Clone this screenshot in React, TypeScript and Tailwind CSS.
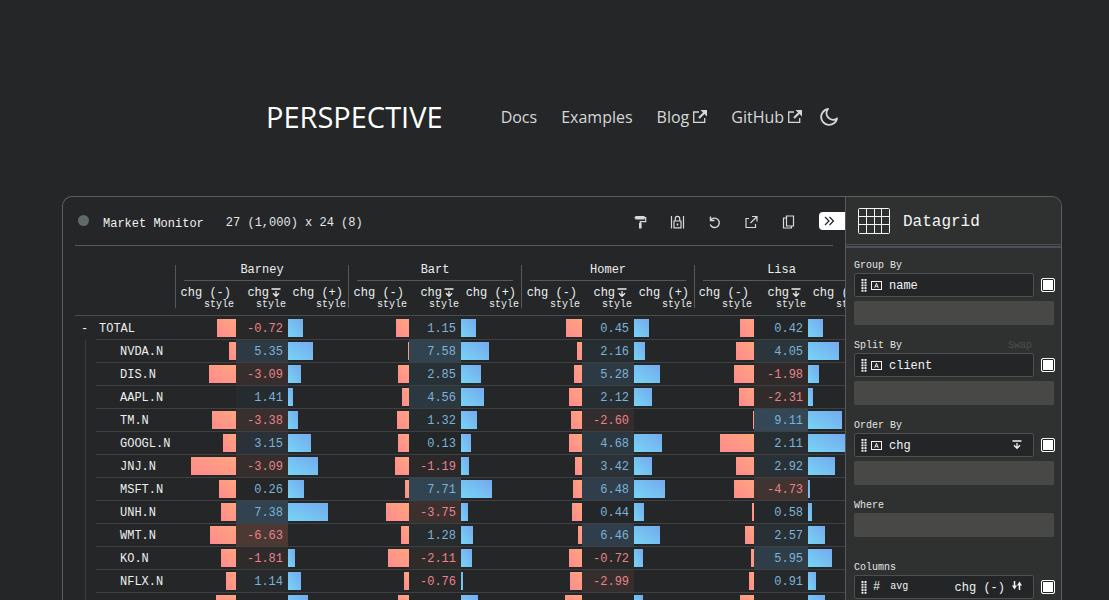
import { Fragment, useState } from 'react';
import type { ReactNode } from 'react';

type Cell = [number, number | null, number];
type Row = { name: string; cells: Cell[] };

const CLIENTS = ['Barney', 'Bart', 'Homer', 'Lisa'];

const ROWS: Row[] = [
  { name: 'TOTAL', cells: [[19, -0.72, 15], [13, 1.15, 15], [16, 0.45, 15], [14, 0.42, 15]] },
  { name: 'NVDA.N', cells: [[7, 5.35, 25], [1, 7.58, 28], [5, 2.16, 11], [18, 4.05, 31]] },
  { name: 'DIS.N', cells: [[27, -3.09, 13], [11, 2.85, 20], [8, 5.28, 26], [20, -1.98, 11]] },
  { name: 'AAPL.N', cells: [[0, 1.41, 5], [7, 4.56, 23], [13, 2.12, 18], [15, -2.31, 5]] },
  { name: 'TM.N', cells: [[24, -3.38, 10], [12, 1.32, 16], [11, -2.6, 0], [1, 9.11, 34]] },
  { name: 'GOOGL.N', cells: [[13, 3.15, 23], [11, 0.13, 10], [13, 4.68, 28], [34, 2.11, 38]] },
  { name: 'JNJ.N', cells: [[45, -3.09, 30], [14, -1.19, 8], [7, 3.42, 18], [18, 2.92, 27]] },
  { name: 'MSFT.N', cells: [[17, 0.26, 16], [4, 7.71, 31], [9, 6.48, 31], [20, -4.73, 2]] },
  { name: 'UNH.N', cells: [[15, 7.38, 40], [23, -3.75, 7], [10, 0.44, 10], [2, 0.58, 4]] },
  { name: 'WMT.N', cells: [[26, -6.63, 0], [8, 1.28, 12], [4, 6.46, 26], [9, 2.57, 17]] },
  { name: 'KO.N', cells: [[15, -1.81, 7], [21, -2.11, 11], [13, -0.72, 9], [3, 5.95, 24]] },
  { name: 'NFLX.N', cells: [[10, 1.14, 13], [5, -0.76, 2], [12, -2.99, 0], [5, 0.91, 8]] },
  { name: '', cells: [[20, null, 20], [11, null, 17], [17, null, 9], [14, null, 17]] },
];

function valueBackground(value: number | null) {
  if (value === null) return 'transparent';
  const strength = Math.min(Math.abs(value) / 7.5, 1.15);
  return value < 0
    ? `rgba(255, 140, 115, ${strength * 0.21})`
    : `rgba(90, 155, 205, ${strength * 0.25})`;
}

function SortDownIcon() {
  return (
    <svg width="10" height="10" viewBox="0 0 10 10" fill="none" stroke="currentColor" strokeWidth="1.3" aria-hidden="true">
      <path d="M0.5 1h9M5 3v5.500M2 5.300 5 8.300l3-3" />
    </svg>
  );
}

function ExternalIcon() {
  return (
    <svg width="14" height="14" viewBox="0 0 14 14" fill="none" stroke="currentColor" aria-hidden="true">
      <path d="M6 2H0.700v10.300h11V8" strokeWidth="1.300" />
      <path d="M6 8 12 2" strokeWidth="2.200" />
      <path d="M7.500 0h6.500v6.500z" fill="currentColor" stroke="none" />
    </svg>
  );
}

function ToolButton({ label, children }: { label: string; children: ReactNode }) {
  return (
    <button type="button" aria-label={label} className="flex size-4 items-center justify-center text-[#d8dada]">
      <svg width="16" height="16" viewBox="0 0 16 16" fill="none" stroke="currentColor" strokeWidth="1.2" aria-hidden="true">
        {children}
      </svg>
    </button>
  );
}

function Toolbar() {
  return (
    <div className="mr-3 flex h-[49px] items-center border-b border-[#56585a] pt-1">
      <span className="mb-[6px] ml-[3px] size-[11px] rounded-full bg-[#616868]" />
      <span className="ml-[14px] pt-px text-xs text-[#f0f2f2]">Market Monitor</span>
      <span className="ml-[22px] text-xs text-[#e4e6e6]">27 (1,000) x 24 (8)</span>
      <div className="-mr-3 mb-[2px] ml-auto flex items-center gap-[21px]">
        <ToolButton label="Theme">
          <path d="M4 2.500h8v2.500H4z" fill="currentColor" />
          <path d="M4 3.700H2.500M12 3.700h1.700v4H8.300v1.500" />
          <path d="M7 9h2.600v5.500H7z" fill="currentColor" stroke="none" />
        </ToolButton>
        <ToolButton label="Lock">
          <path d="M2.500 2v12.500M14.500 2v12.500" />
          <path d="M5 7h7v6.800H5zM6.300 7V4.600a2.200 2.200 0 0 1 4.400 0V7" />
          <path d="M7.700 9.500h1.600v2H7.700z" fill="currentColor" stroke="none" />
        </ToolButton>
        <ToolButton label="Reset">
          <path d="M4.500 2.500v4h4M4.600 6.300A4.700 4.700 0 1 1 4.200 10.500" strokeWidth="1.400" />
        </ToolButton>
        <ToolButton label="Export">
          <path d="M6 4.500H3v9h9.500V10M9 2.500h5V7.500M14 2.500 7.500 9" />
        </ToolButton>
        <ToolButton label="Copy">
          <path d="M6.500 2h7v10h-7zM6.500 4H3.500v10h8V12" />
        </ToolButton>
        <button type="button" aria-label="Close settings" className="mb-[3px] ml-[2px] flex h-[18px] w-[26px] items-center rounded-l bg-white pl-[5px] text-[#202223]">
          <svg width="12" height="10" viewBox="0 0 12 10" fill="none" stroke="currentColor" strokeWidth="1.2" aria-hidden="true">
            <path d="M1 1l4 4-4 4M5.500 1l4 4-4 4" />
          </svg>
        </button>
      </div>
    </div>
  );
}

function ColumnHeader({ label, sorted, first }: { label: string; sorted?: boolean; first?: boolean }) {
  return (
    <th scope="col" className="h-9 p-0 text-right align-top font-normal">
      <div className="h-[35px] border-b border-[#4a4c4e]">
        <div className={`flex h-[27px] flex-col items-end pt-[5px] whitespace-nowrap ${first ? 'border-l border-[#56585a]' : ''}`}>
          <span className={`flex items-center text-xs leading-[14px] ${sorted ? 'gap-[2px] pr-[7px]' : 'pr-[5px]'}`}>
            {label}
            {sorted && <SortDownIcon />}
          </span>
          <span className="pr-[2px] text-[10px] leading-[9px]">style</span>
        </div>
      </div>
    </th>
  );
}

function DataTable() {
  return (
    <table className="w-[793px] table-fixed border-separate border-spacing-0 text-xs text-[#eceeee]">
      <colgroup>
        <col className="w-[100px]" />
        {CLIENTS.map((client, i) => (
          <Fragment key={client}>
            <col className={i === 3 ? 'w-[60px]' : 'w-[61px]'} />
            <col className={i === 3 ? 'w-[54px]' : 'w-[52px]'} />
            <col className="w-[60px]" />
          </Fragment>
        ))}
      </colgroup>
      <thead>
        <tr>
          <td className="p-0" />
          {CLIENTS.map((client) => (
            <th key={client} colSpan={3} scope="colgroup" className="h-4 border-l border-[#56585a] p-0 font-normal">
              <div className="mx-2 h-4 border-b border-[#56585a] leading-[10px]">{client}</div>
            </th>
          ))}
        </tr>
        <tr>
          <td className="h-9 p-0 align-top">
            <div className="h-[35px] border-b border-[#4a4c4e]" />
          </td>
          {CLIENTS.map((client) => (
            <Fragment key={client}>
              <ColumnHeader label="chg (-)" first />
              <ColumnHeader label="chg" sorted />
              <ColumnHeader label="chg (+)" />
            </Fragment>
          ))}
        </tr>
      </thead>
      <tbody>
        {ROWS.map((row, index) => (
          <tr key={index}>
            <th scope="row" className="h-[23px] p-0 text-left font-normal">
              <div className="flex h-[23px]">
                {index === 0 ? (
                  <button type="button" aria-label="Collapse TOTAL" className="w-[21px] pr-[2px] text-center leading-6">
                    -
                  </button>
                ) : (
                  <div className="mr-[10px] w-[11px] border-r border-[#3c3e40]" />
                )}
                <div className={`flex-1 border-b border-[#3e4042] leading-[25px] ${index === 0 ? 'pl-[3px]' : 'pl-6'}`}>{row.name}</div>
              </div>
            </th>
            {row.cells.map(([down, value, up], c) => (
              <Fragment key={CLIENTS[c]}>
                <td className="h-[23px] border-b border-[#3e4042] p-0">
                  <div className="ml-auto h-[18px] bg-linear-to-tr from-[#ff8a8c] to-[#ffa57f]" style={{ width: down }} />
                </td>
                <td
                  className={`h-[23px] border-b border-[#3e4042] p-0 ${value !== null && value < 0 ? 'text-[#e8838c]' : 'text-[#7eb2d6]'}`}
                  style={{ backgroundColor: valueBackground(value) }}
                >
                  <div className="h-[22px] pr-[5px] text-right leading-[25px]">{value === null ? '' : value.toFixed(2)}</div>
                </td>
                <td className="h-[23px] border-b border-[#3e4042] p-0">
                  <div className="h-[18px] bg-linear-to-tr from-[#77d5f5] to-[#74a9ee]" style={{ width: up }} />
                </td>
              </Fragment>
            ))}
          </tr>
        ))}
      </tbody>
    </table>
  );
}

function GripIcon() {
  return (
    <svg width="6" height="13" viewBox="0 0 6 13" fill="currentColor" aria-hidden="true">
      {[0, 2.7, 5.4, 8.1, 10.8].map((y) => (
        <Fragment key={y}>
          <rect x="0.500" y={y} width="2" height="1.900" />
          <rect x="3.500" y={y} width="2" height="1.900" />
        </Fragment>
      ))}
    </svg>
  );
}

function StringIcon() {
  return (
    <svg width="11" height="9" viewBox="0 0 11 9" fill="none" stroke="currentColor" aria-hidden="true">
      <rect x="0.500" y="0.500" width="10" height="8" />
      <path d="M3.700 6.800 5.500 2.200l1.800 4.600M4.300 5.300h2.400" strokeWidth="0.900" />
    </svg>
  );
}

function FieldRow({ name, children }: { name: string; children: ReactNode }) {
  const [active, setActive] = useState(true);
  return (
    <div className="flex items-center gap-[7px]">
      <div className="flex h-6 min-w-0 flex-1 items-center rounded-[2px] border border-[#4d4f50] bg-[#232526] pr-[11px] pl-[6px] text-xs text-[#f2f4f4]">
        <GripIcon />
        {children}
      </div>
      <input
        type="checkbox"
        aria-label={`${name} enabled`}
        checked={active}
        onChange={() => setActive(!active)}
        className="size-[14px] shrink-0 appearance-none rounded-[2px] border border-white shadow-[inset_0_0_0_1px_#202223] checked:bg-white"
      />
    </div>
  );
}

function DropZone({ label }: { label: string }) {
  return <input type="text" aria-label={`Add to ${label}`} className="block h-6 w-[200px] rounded-[2px] bg-[#484846] px-2 text-xs text-white outline-none" />;
}

function Section({ title, action, children }: { title: string; action?: ReactNode; children: ReactNode }) {
  return (
    <section className="flex flex-col gap-1">
      <div className="-mb-1 flex h-4 items-center justify-between pr-[23px] text-[10px] text-[#e2e4e4]">
        <h3>{title}</h3>
        {action}
      </div>
      {children}
    </section>
  );
}

function Settings() {
  return (
    <aside className="w-[216px] shrink-0 border-l border-[#56585a] bg-[#2f3131]">
      <div className="border-b-2 border-[#4a4f5e] pb-px">
        <button type="button" className="flex h-12 w-full items-center gap-[13px] border-b border-[#4a4d55] pl-3 text-left text-[#f4f6f6]">
          <svg width="32" height="26" viewBox="0 0 32 26" fill="none" stroke="currentColor" aria-hidden="true">
            <rect x="0.500" y="0.500" width="31" height="25" rx="1" />
            <path d="M0.500 8.500h31M0.500 16.500h31" />
            <path d="M8.500 0.500v25M16.500 0.500v25M23.500 0.500v25" />
          </svg>
          <span className="pt-[2px] text-base">Datagrid</span>
        </button>
      </div>
      <div className="flex flex-col gap-3 pt-[9px] pr-[6px] pl-2">
        <Section title="Group By">
          <FieldRow name="name">
            <span className="ml-[4px]"><StringIcon /></span>
            <span className="ml-[7px] pt-px">name</span>
          </FieldRow>
          <DropZone label="Group By" />
        </Section>
        <Section title="Split By" action={<button type="button" className="text-[#4c4e4f]">Swap</button>}>
          <FieldRow name="client">
            <span className="ml-[4px]"><StringIcon /></span>
            <span className="ml-[7px] pt-px">client</span>
          </FieldRow>
          <DropZone label="Split By" />
        </Section>
        <Section title="Order By">
          <FieldRow name="chg">
            <span className="ml-[4px]"><StringIcon /></span>
            <span className="ml-[7px] pt-px">chg</span>
            <button type="button" aria-label="Sort descending" className="ml-auto"><SortDownIcon /></button>
          </FieldRow>
          <DropZone label="Order By" />
        </Section>
        <Section title="Where">
          <DropZone label="Where" />
        </Section>
        <div className="pt-[10px]">
          <Section title="Columns">
            <FieldRow name="chg (-)">
              <span className="ml-[6px]">#</span>
              <span className="ml-[10px] text-[10px]">avg</span>
              <span className="ml-auto pt-px">chg (-)</span>
              <svg className="mb-1 ml-[7px]" width="10" height="9" viewBox="0 0 10 9" fill="none" stroke="currentColor" strokeWidth="1.500" aria-hidden="true">
                <path d="M2.500 0v6M7.500 3v6" />
                <path d="M0 4.500h5L2.500 8.500zM5 4.500h5L7.500 0.500z" fill="currentColor" stroke="none" />
              </svg>
            </FieldRow>
          </Section>
        </div>
      </div>
    </aside>
  );
}

export default function App() {
  return (
    <div className="flex h-screen flex-col overflow-hidden bg-[#242627]">
      <header className="flex shrink-0 items-center justify-center pt-[97px] pr-[5px] pb-[59px] font-['Open_Sans',sans-serif] text-[#d6d8d8]">
        <a href="#home" className="mr-[58px] flex h-10 items-center text-[29px] text-white">PERSPECTIVE</a>
        <nav className="flex items-center gap-6 text-base">
          <a href="#docs">Docs</a>
          <a href="#examples">Examples</a>
          <a href="#blog" className="flex items-center gap-1">Blog <ExternalIcon /></a>
          <a href="#github" className="flex items-center gap-1">GitHub <ExternalIcon /></a>
          <button type="button" aria-label="Toggle theme" className="-ml-[6px]">
            <svg width="18" height="18" viewBox="0 0 18 18" fill="none" stroke="currentColor" strokeWidth="1.900" strokeLinejoin="round" aria-hidden="true">
              <path d="M8 1A8 8 0 1 0 17 10.500A6.600 6.600 0 0 1 8 1z" />
            </svg>
          </button>
        </nav>
      </header>
      <main className="mr-[47px] ml-[62px] flex min-h-0 flex-1 overflow-hidden rounded-t-[10px] border border-b-0 border-[#5c5e60] font-['Liberation_Mono',monospace]">
        <div className="min-w-0 flex-1 overflow-hidden pl-3">
          <Toolbar />
          <div className="overflow-hidden pt-[19px]">
            <DataTable />
          </div>
        </div>
        <Settings />
      </main>
    </div>
  );
}
